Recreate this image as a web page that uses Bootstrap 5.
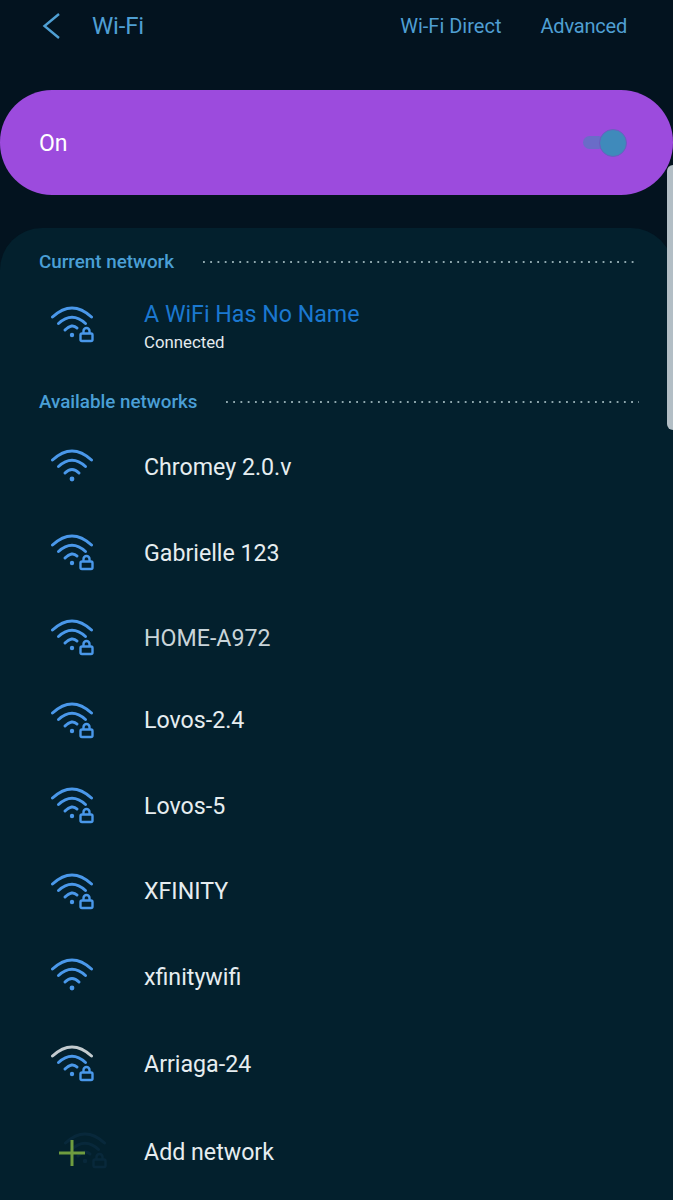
<!DOCTYPE html>
<html lang="en">
<head>
    <meta charset="UTF-8">
    <meta name="viewport" content="width=device-width, initial-scale=1.0">
    <title>Wi-Fi</title>
    <link href="https://cdn.jsdelivr.net/npm/bootstrap@5.3.3/dist/css/bootstrap.min.css" rel="stylesheet">
    <style>
        body { background: #03131f; font-family: Roboto, "Liberation Sans", sans-serif; height: 1200px; overflow: hidden; position: relative; }
        .top-bar { height: 52px; padding: 0 46px 0 41px; color: #4f9fd3; font-size: 20px; }
        .top-title { font-size: 24px; margin-left: 26px; letter-spacing: -.2px; }
        .back-icon { width: 25px; height: 26px; }
        .adv-link { letter-spacing: -.2px; margin-left: 39px; }
        .on-pill { height: 105px; margin-top: 38px; border-radius: 52px; background: #9c4bdd; padding: 3px 46px 0 39px; color: #fff; font-size: 23px; }
        .tog-track { width: 22px; height: 13px; border-radius: 7px; background: #6a6cc8; margin-top: -3px; }
        .tog-thumb { width: 28px; height: 28px; border-radius: 50%; background: #3f8abb; border: 1px solid #6d5cc0; margin: -3px 0 0 -6px; }
        .net-panel { margin-top: 33px; background: #03202d; border-radius: 42px 42px 0 0; height: 972px; padding: 22px 34px 0 39px; }
        .sect-head { color: #4a9fd6; font-size: 18.8px; font-weight: 500; gap: 28.5px; height: 24px; }
        .sect-head .dots { height: 2px; background-image: linear-gradient(to right, #8fa8ae 2px, transparent 2px); background-size: 7.25px 2px; background-repeat: round no-repeat; }
        .net-list { --bs-list-group-bg: transparent; --bs-list-group-border-width: 0; margin: 0 0 0 -39px; }
        .net-row { height: 85.4px; padding: 0 0 0 50px; color: #e6edf0; font-size: 23.2px; }
        .net-row svg { width: 46px; height: 38px; margin: -2px 48px 0 0; flex: none; }
        .cur-row { height: 103px; margin-bottom: 13px; }
        .net-row.cur-row svg { margin-top: -3px; }
        .avail-list { margin-top: 11px; }
        .row-up { margin-top: -3px; }
        .row-down { margin-top: 2px; }
        .row-dim { color: #c9d4d9; }
        .cur-name { color: #1b78d0; line-height: 30px; }
        .cur-sub { color: #e4ebee; font-size: 16.8px; line-height: 22px; margin-top: 2px; }
        .wf { fill: none; stroke: #4a98ea; stroke-width: 3; stroke-linecap: round; }
        .wf-thin { stroke-width: 2.4; }
        .wf-dot { fill: #4a98ea; }
        .wf-gray { stroke: #c3cbcf; }
        .add-row { position: relative; margin-top: 3px; }
        .net-row .ghost-icon { position: absolute; left: 63px; top: 21px; margin: 0; opacity: .07; }
        .net-row .plus-icon { position: absolute; left: 59px; top: 30px; width: 26px; height: 26px; margin: 0; }
        .plus-icon path { stroke: #6f9c3f; stroke-width: 3; fill: none; }
        .add-label { margin-left: 94px; }
        .scroll-thumb { position: absolute; left: 667px; top: 165px; width: 6px; height: 265px; background: #b2bec5; border-radius: 6px 0 0 6px; }
    </style>
</head>
<body>
    <svg width="0" height="0" class="position-absolute">
        <symbol id="wifi-open" viewBox="0 0 46 38">
            <path class="wf" d="M2.5 12 Q22 -6 41.5 12"/>
            <path class="wf" d="M8.5 18.5 Q22 6 35.5 18.5"/>
            <path class="wf" d="M15 25 Q22 18 29 25"/>
            <circle class="wf-dot" cx="22" cy="31" r="2.4"/>
        </symbol>
        <symbol id="wifi-lock" viewBox="0 0 46 38">
            <path class="wf" d="M2.5 12 Q22 -6 41.5 12"/>
            <path class="wf" d="M8.5 18.5 Q22 6 35.5 18.5"/>
            <path class="wf" d="M15 25 Q22 18 27 23"/>
            <circle class="wf-dot" cx="22" cy="30" r="2.2"/>
            <rect class="wf wf-thin" x="30.5" y="28.5" width="12" height="7.5" rx="1.5"/>
            <path class="wf wf-thin" d="M33.5 27.5 v-1.5 a3 3 0 0 1 6 0 v1.5"/>
        </symbol>
        <symbol id="wifi-lock-gray" viewBox="0 0 46 38">
            <path class="wf wf-gray" d="M2.5 12 Q22 -6 41.5 12"/>
            <path class="wf" d="M8.5 18.5 Q22 6 35.5 18.5"/>
            <path class="wf" d="M15 25 Q22 18 27 23"/>
            <circle class="wf-dot" cx="22" cy="30" r="2.2"/>
            <rect class="wf wf-thin" x="30.5" y="28.5" width="12" height="7.5" rx="1.5"/>
            <path class="wf wf-thin" d="M33.5 27.5 v-1.5 a3 3 0 0 1 6 0 v1.5"/>
        </symbol>
    </svg>

    <header class="top-bar d-flex align-items-center">
        <svg class="back-icon" viewBox="0 0 25 26"><path d="M18 1 L3.5 13 L18 25" fill="none" stroke="#4f9fd3" stroke-width="2.4"/></svg>
        <span class="top-title">Wi-Fi</span>
        <span class="ms-auto">Wi-Fi Direct</span>
        <span class="adv-link">Advanced</span>
    </header>

    <div class="on-pill d-flex align-items-center">
        <span>On</span>
        <span class="tog-track ms-auto"></span>
        <span class="tog-thumb"></span>
    </div>

    <section class="net-panel">
        <div class="sect-head d-flex align-items-center">
            <span>Current network</span><span class="dots flex-grow-1"></span>
        </div>
        <ul class="list-group net-list">
            <li class="list-group-item net-row cur-row d-flex align-items-center">
                <svg><use href="#wifi-lock"/></svg>
                <div>
                    <div class="cur-name">A WiFi Has No Name</div>
                    <div class="cur-sub">Connected</div>
                </div>
            </li>
        </ul>
        <div class="sect-head d-flex align-items-center">
            <span>Available networks</span><span class="dots flex-grow-1"></span>
        </div>
        <ul class="list-group net-list avail-list">
            <li class="list-group-item net-row d-flex align-items-center"><svg><use href="#wifi-open"/></svg>Chromey 2.0.v</li>
            <li class="list-group-item net-row d-flex align-items-center"><svg><use href="#wifi-lock"/></svg>Gabrielle 123</li>
            <li class="list-group-item net-row row-dim d-flex align-items-center"><svg><use href="#wifi-lock"/></svg>HOME-A972</li>
            <li class="list-group-item net-row row-up d-flex align-items-center"><svg><use href="#wifi-lock"/></svg>Lovos-2.4</li>
            <li class="list-group-item net-row d-flex align-items-center"><svg><use href="#wifi-lock"/></svg>Lovos-5</li>
            <li class="list-group-item net-row d-flex align-items-center"><svg><use href="#wifi-lock"/></svg>XFINITY</li>
            <li class="list-group-item net-row d-flex align-items-center"><svg><use href="#wifi-open"/></svg>xfinitywifi</li>
            <li class="list-group-item net-row row-down d-flex align-items-center"><svg><use href="#wifi-lock-gray"/></svg>Arriaga-24</li>
            <li class="list-group-item net-row add-row d-flex align-items-center">
                <svg class="ghost-icon"><use href="#wifi-lock"/></svg>
                <svg class="plus-icon" viewBox="0 0 26 26"><path d="M0 13 H26 M13 0 V26"/></svg>
                <span class="add-label">Add network</span>
            </li>
        </ul>
    </section>
    <div class="scroll-thumb"></div>
</body>
</html>
